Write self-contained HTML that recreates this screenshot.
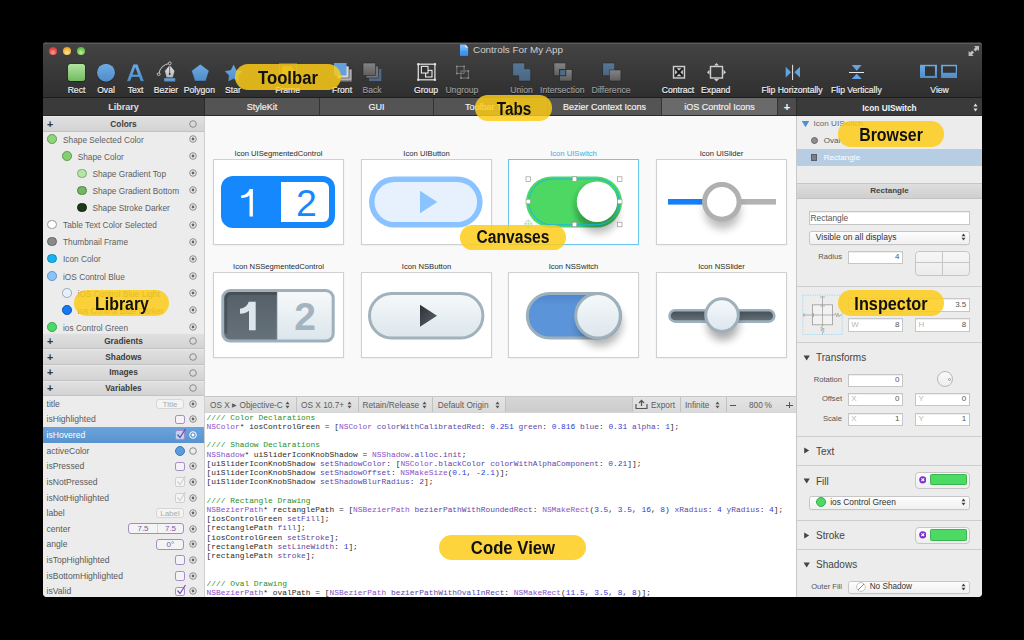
<!DOCTYPE html>
<html><head><meta charset="utf-8">
<style>
*{margin:0;padding:0;box-sizing:border-box}
html,body{width:1024px;height:640px;overflow:hidden;background:#000;font-family:"Liberation Sans",sans-serif}
.a{position:absolute}
.win{left:43px;top:42px;width:939px;height:555px;background:#ececec;border-radius:4px;overflow:hidden}
.tb{left:43px;top:42px;width:939px;height:56px;background:linear-gradient(#444,#2f2f2f);border-radius:0;border-top:1px solid #2a2a2a;box-shadow:inset 0 1px 0 #5c5c5c;border-bottom:1px solid #1c1c1c}
.lbl{position:absolute;top:85px;font-size:8.6px;color:#eeeeee;-webkit-text-stroke:.2px currentColor;white-space:nowrap;transform:translateX(-50%);line-height:10px;text-shadow:0 1px 0 #111}
.lbl.dim{color:#9a9a9a}
.tabbar{left:43px;top:98px;width:939px;height:18px;background:#3a3a3a;border-bottom:1px solid #2a2a2a}
.tab{position:absolute;top:98px;height:17px;background:#545454;color:#f4f4f4;font-size:9px;line-height:18px;-webkit-text-stroke:.15px currentColor;text-align:center;border-right:1px solid #333}
.code{font-family:"Liberation Mono",monospace;font-size:7.88px;line-height:9.22px;color:#2a2a2a;white-space:pre}
.cm{color:#2a8f2a}.cl{color:#8b50c4}.me{color:#5c48a8}.nu{color:#2d3cd8}
.pill{background:rgba(253,204,21,.84)}
.ptxt{width:120px;height:20px;line-height:20px;text-align:center;font-size:18px;font-weight:bold;color:#111;white-space:nowrap}
</style></head>
<body>
<div id="wrap" style="position:absolute;left:0;top:0;width:1024px;height:640px;clip-path:inset(42px 42px 43px 43px round 4px)">
<div class="a win"></div>
<!-- title/toolbar -->
<div class="a tb"></div>
<!-- traffic lights -->
<div class="a" style="left:49px;top:47px;width:8px;height:8px;border-radius:50%;background:radial-gradient(circle at 50% 70%,#ff9a94,#e0443e 60%,#b02a25)"></div>
<div class="a" style="left:63px;top:47px;width:8px;height:8px;border-radius:50%;background:radial-gradient(circle at 50% 70%,#ffe39a,#f0b238 60%,#c08820)"></div>
<div class="a" style="left:77px;top:47px;width:8px;height:8px;border-radius:50%;background:radial-gradient(circle at 50% 70%,#bff0a0,#6cc24a 60%,#4a9a30)"></div>
<!-- title -->
<svg class="a" style="left:458px;top:43px" width="12" height="15" viewBox="458 43 12 15"><defs><linearGradient id="docg" x1="0" y1="0" x2="0" y2="1"><stop offset="0" stop-color="#86c6ff"/><stop offset="1" stop-color="#2a86ee"/></linearGradient></defs><path d="M460 44.5h5.4l2.7 2.9v8.6h-8.1z" fill="url(#docg)"/><path d="M465.4 44.5v2.9h2.7z" fill="#e8f2fc"/><path d="M461.8 51.5h4.6" stroke="#3a90ea" stroke-width="1"/></svg>
<div class="a" style="left:473px;top:44px;font-size:9.9px;color:#d0d0d0;line-height:12px">Controls For My App</div>
<!-- fullscreen icon -->
<svg class="a" style="left:960px;top:40px" width="24" height="20" viewBox="960 40 24 20"><path d="M974 46h5v5l-1.5-1.5-2 2-2-2 2-2z" fill="#bdbdbd"/><path d="M973.6 56h-5v-5l1.5 1.5 2-2 2 2-2 2z" fill="#bdbdbd"/></svg>

<svg class="a" style="left:0;top:0" width="1024" height="98" viewBox="0 0 1024 98">
<defs>
<linearGradient id="gG" x1="0" y1="0" x2="0" y2="1"><stop offset="0" stop-color="#b2e3a0"/><stop offset="1" stop-color="#72bb62"/></linearGradient>
<linearGradient id="gB" x1="0" y1="0" x2="0" y2="1"><stop offset="0" stop-color="#6fabe2"/><stop offset="1" stop-color="#4f8cc9"/></linearGradient>
<linearGradient id="gGr" x1="0" y1="0" x2="0" y2="1"><stop offset="0" stop-color="#858585"/><stop offset="1" stop-color="#5e5e5e"/></linearGradient>
<linearGradient id="gBG" x1="0" y1="0" x2="0" y2="1"><stop offset="0" stop-color="#567896"/><stop offset="1" stop-color="#4a6682"/></linearGradient>
<linearGradient id="gW" x1="0" y1="0" x2="0" y2="1"><stop offset="0" stop-color="#e8e8e8"/><stop offset="1" stop-color="#b8b8b8"/></linearGradient>
</defs>
<!-- Rect -->
<rect x="67.5" y="63.5" width="18" height="18.5" rx="3" fill="#1a1a1a" opacity=".6"/>
<rect x="68" y="64" width="17" height="17" rx="2.5" fill="url(#gG)"/>
<!-- Oval -->
<circle cx="106" cy="73" r="9.5" fill="#1a1a1a" opacity=".6"/>
<circle cx="106" cy="72.7" r="9" fill="url(#gB)"/>
<!-- Text A -->
<path d="M133.3 64.3h4.2l6.6 16.9h-3.6l-1.5-4.1h-7.2l-1.5 4.1h-3.5zM132.8 74.4h5l-2.5-6.8z" fill="url(#gB)" fill-rule="evenodd" stroke="#1a1a1a" stroke-width=".4" stroke-opacity=".5"/>
<!-- Bezier -->
<path d="M158.8 74.2 Q160 65 169.8 63.3" fill="none" stroke="#d8d8d8" stroke-width=".9"/>
<ellipse cx="158.7" cy="74.2" rx="1.6" ry="1.2" fill="#333" stroke="#e0e0e0" stroke-width=".8"/>
<circle cx="169.8" cy="63.3" r="1.4" fill="#333" stroke="#e0e0e0" stroke-width=".8"/>
<path d="M169.7 64.8 L174.8 71 L173 77.7 L166.4 77.7 L164.6 71 Z" fill="url(#gW)" stroke="#222" stroke-width=".5"/>
<line x1="169.7" y1="65.5" x2="169.7" y2="74" stroke="#333" stroke-width=".7"/>
<circle cx="169.7" cy="74" r=".9" fill="#333"/>
<rect x="164.2" y="78.3" width="11" height="3.2" fill="url(#gB)"/>
<!-- Polygon -->
<polygon points="200.3,64.3 209.0,70.7 205.7,80.9 194.9,80.9 191.6,70.7" fill="url(#gB)" stroke="#1a1a1a" stroke-opacity=".5" stroke-width=".5"/>
<!-- Star -->
<polygon points="233.6,64.3 236.5,69.9 242.7,70.9 238.4,75.4 239.2,81.7 233.6,78.9 228.0,81.7 228.8,75.4 224.5,70.9 230.7,69.9" stroke-linejoin="round" fill="url(#gB)" stroke="#1a1a1a" stroke-opacity=".5" stroke-width=".5"/>
<!-- Frame -->
<rect x="279.5" y="63.5" width="17" height="17" fill="none" stroke="#3ec0e8" stroke-width="1" stroke-dasharray="1 1"/>
<path d="M282 66h9l3 3v10h-12z" fill="#e8d070" opacity=".5"/>
<!-- Front -->
<rect x="340" y="69" width="12" height="12.5" fill="#b0b0b0"/>
<rect x="340" y="69" width="12" height="12" fill="none" stroke="#2a2a2a" stroke-width=".6"/>
<rect x="337" y="66" width="12" height="12.5" fill="#d8d8d8"/>
<rect x="337" y="66" width="12" height="12" fill="none" stroke="#2a2a2a" stroke-width=".6"/>
<rect x="334" y="63" width="12.5" height="12.5" fill="#64a0dc"/>
<!-- Back -->
<rect x="369" y="69" width="12.3" height="12" fill="#4d6a88"/>
<rect x="366" y="66" width="12.3" height="12" fill="#737373" stroke="#2a2a2a" stroke-width=".6"/>
<rect x="363" y="63" width="12.5" height="12.5" fill="url(#gGr)" stroke="#2a2a2a" stroke-width=".6"/>
<!-- Group -->
<rect x="418.3" y="64.2" width="16.6" height="15.6" fill="none" stroke="#d8d8d8" stroke-width="1.3"/>
<g fill="#e0e0e0"><circle cx="418.3" cy="64.2" r="1.2"/><circle cx="434.9" cy="64.2" r="1.2"/><circle cx="418.3" cy="79.8" r="1.2"/><circle cx="434.9" cy="79.8" r="1.2"/></g>
<rect x="425.6" y="70.4" width="6.4" height="6.6" fill="none" stroke="#e8e8e8" stroke-width="1.1"/>
<rect x="421.4" y="66.4" width="6.6" height="6.6" fill="#2f2f2f" stroke="#e8e8e8" stroke-width="1.1"/>
<!-- Ungroup -->
<g stroke="#777" stroke-width="1" fill="none"><rect x="456.8" y="66.4" width="7.3" height="7"/><rect x="461" y="71" width="7.3" height="7"/></g>
<g fill="#888"><circle cx="456.8" cy="66.4" r="1"/><circle cx="464.1" cy="66.4" r="1"/><circle cx="456.8" cy="73.4" r="1"/><circle cx="468.3" cy="71" r="1"/><circle cx="461" cy="78" r="1"/><circle cx="468.3" cy="78" r="1"/></g>
<!-- Union -->
<path d="M512.7 63h12v5.8h6v12.3h-12v-5.3h-6z" fill="url(#gBG)" stroke="#222" stroke-width=".5"/>
<!-- Intersection -->
<rect x="554" y="63" width="11.8" height="12.8" fill="url(#gGr)" stroke="#262626" stroke-width=".5"/>
<rect x="559.7" y="69.7" width="12.3" height="11.3" fill="url(#gGr)" stroke="#262626" stroke-width=".5"/>
<rect x="559.7" y="69.7" width="6.1" height="6.1" fill="#4f6d8a" stroke="#262626" stroke-width=".8"/>
<!-- Difference -->
<rect x="602.8" y="63" width="12" height="12.8" fill="url(#gBG)" stroke="#222" stroke-width=".5"/>
<rect x="609.4" y="70" width="11.5" height="11" fill="url(#gGr)" stroke="#222" stroke-width=".5"/>
<!-- Contract -->
<rect x="673.5" y="66.5" width="11" height="11.5" fill="#353535" stroke="#cfcfcf" stroke-width="1.4"/>
<path d="M675.3 68.3l7.4 7.4M682.7 68.3l-7.4 7.4" stroke="#181818" stroke-width="1.4"/>
<g fill="#d0d0d0"><path d="M676.6 68.3h4.8l-2.4 2.2z"/><path d="M676.6 76.2h4.8l-2.4-2.2z"/><path d="M675.2 69.8v4.8l2.2-2.4z"/><path d="M682.8 69.8v4.8l-2.2-2.4z"/></g>
<!-- Expand -->
<rect x="710.5" y="66.5" width="12" height="11.5" fill="none" stroke="#cfcfcf" stroke-width="1.4"/>
<g fill="#d0d0d0"><path d="M714 65.5h5l-2.5-2.5z"/><path d="M714 79h5l-2.5 2.5z"/><path d="M709.5 69.8v5l-2.5-2.5z"/><path d="M723.5 69.8v5l2.5-2.5z"/></g>
<!-- Flip H -->
<path d="M785.7 66.8v10.7l5.3-5.35z" fill="#64a4e0"/>
<path d="M800 66.8v10.7l-5.6-5.35z" fill="#64a4e0"/>
<line x1="792.6" y1="64.8" x2="792.6" y2="80" stroke="#e8e8e8" stroke-width="1"/>
<!-- Flip V -->
<path d="M851.7 65h10l-5 5.7z" fill="#64a4e0"/>
<path d="M851.7 79h10l-5-5.2z" fill="#64a4e0"/>
<line x1="849" y1="72.5" x2="864" y2="72.5" stroke="#e8e8e8" stroke-width="1.1"/>
<!-- View -->
<rect x="920" y="64.8" width="17" height="13.2" fill="url(#gB)"/>
<rect x="925" y="66.3" width="9.9" height="9.6" fill="#333"/>
<rect x="941.1" y="64.8" width="15.9" height="13.2" fill="url(#gB)"/>
<rect x="942.9" y="66.3" width="12.8" height="6.5" fill="#333"/>
</svg>
<div class="lbl" style="left:76.5px">Rect</div>
<div class="lbl" style="left:106px">Oval</div>
<div class="lbl" style="left:135.6px">Text</div>
<div class="lbl" style="left:166px">Bezier</div>
<div class="lbl" style="left:199.4px">Polygon</div>
<div class="lbl" style="left:233px">Star</div>
<div class="lbl" style="left:287.6px">Frame</div>
<div class="lbl" style="left:342px">Front</div>
<div class="lbl dim" style="left:372px">Back</div>
<div class="lbl" style="left:426px">Group</div>
<div class="lbl dim" style="left:461.9px">Ungroup</div>
<div class="lbl dim" style="left:521.6px">Union</div>
<div class="lbl dim" style="left:562.3px">Intersection</div>
<div class="lbl dim" style="left:611px">Difference</div>
<div class="lbl" style="left:678px">Contract</div>
<div class="lbl" style="left:715.7px">Expand</div>
<div class="lbl" style="left:792px">Flip Horizontally</div>
<div class="lbl" style="left:856.4px">Flip Vertically</div>
<div class="lbl" style="left:939.6px">View</div>


<!-- tab bar -->
<div class="a tabbar"></div>
<div class="a" style="left:43px;top:98px;width:161px;height:17px;color:#e0e0e0;font-size:9px;font-weight:bold;line-height:18px;text-align:center">Library</div>
<div class="a" style="left:204px;top:98px;width:1px;height:18px;background:#2a2a2a"></div>
<div class="tab" style="left:205px;width:115px">StyleKit</div>
<div class="tab" style="left:320px;width:114px">GUI</div>
<div class="tab" style="left:434px;width:114px">Toolbar Tabs</div>
<div class="tab" style="left:548px;width:114px">Bezier Context Icons</div>
<div class="tab" style="left:662px;width:116px;background:#6a6a6a">iOS Control Icons</div>
<div class="tab" style="left:778px;width:19px;background:#4c4c4c;font-size:11px;font-weight:bold;border-right:1px solid #2a2a2a">+</div>
<div class="a" style="left:797px;top:98.5px;width:185px;height:17px;color:#f4f4f4;font-size:8.3px;font-weight:bold;line-height:18px;text-align:center">Icon UISwitch</div>

<div class="a" style="left:43px;top:116px;width:161px;height:481px;background:#ececec"></div>
<div class="a" style="left:204px;top:116px;width:1px;height:481px;background:#cfcfcf"></div>
<div class="a" style="left:43px;top:116px;width:161px;height:16px;background:linear-gradient(#e0e0e0,#d3d3d3);border-bottom:1px solid #c2c2c2;border-top:1px solid #e9e9e9"></div>
<div class="a" style="left:46.2px;top:116px;width:8px;height:16px;font-size:10.5px;font-weight:bold;color:#333;line-height:16px;text-align:center">+</div>
<div class="a" style="left:43px;top:116px;width:161px;height:16px;font-size:8.3px;font-weight:bold;color:#3c3c3c;line-height:16px;text-align:center">Colors</div>
<svg class="a" style="left:188.9px;top:120.00px" width="8" height="8" viewBox="0 0 8 8"><circle cx="4" cy="4" r="3.3" fill="none" stroke="#8c8c8c" stroke-width="1"/></svg>
<div class="a" style="left:47.2px;top:134.40px;width:9.6px;height:9.6px;border-radius:50%;background:#8ed67c;border:.8px solid #5e9d4f"></div>
<div class="a" style="left:63.0px;top:134.00px;font-size:8.3px;line-height:12px;color:#5e5e5e;white-space:nowrap">Shape Selected Color</div>
<svg class="a" style="left:188.9px;top:135.20px" width="8" height="8" viewBox="0 0 8 8"><circle cx="4" cy="4" r="3.3" fill="none" stroke="#8c8c8c" stroke-width="1"/><circle cx="4" cy="4" r="1.4" fill="#666"/></svg>
<div class="a" style="left:62.2px;top:151.47px;width:9.6px;height:9.6px;border-radius:50%;background:#82d06f;border:.8px solid #5a9a4a"></div>
<div class="a" style="left:77.7px;top:151.07px;font-size:8.3px;line-height:12px;color:#5e5e5e;white-space:nowrap">Shape Color</div>
<svg class="a" style="left:188.9px;top:152.27px" width="8" height="8" viewBox="0 0 8 8"><circle cx="4" cy="4" r="3.3" fill="none" stroke="#8c8c8c" stroke-width="1"/><circle cx="4" cy="4" r="1.4" fill="#666"/></svg>
<div class="a" style="left:77.2px;top:168.54px;width:9.6px;height:9.6px;border-radius:50%;background:#b4e6a4;border:.8px solid #7ba96e"></div>
<div class="a" style="left:92.4px;top:168.14px;font-size:8.3px;line-height:12px;color:#5e5e5e;white-space:nowrap">Shape Gradient Top</div>
<svg class="a" style="left:188.9px;top:169.34px" width="8" height="8" viewBox="0 0 8 8"><circle cx="4" cy="4" r="3.3" fill="none" stroke="#8c8c8c" stroke-width="1"/><circle cx="4" cy="4" r="1.4" fill="#666"/></svg>
<div class="a" style="left:77.2px;top:185.61px;width:9.6px;height:9.6px;border-radius:50%;background:#74b463;border:.8px solid #4e8542"></div>
<div class="a" style="left:92.4px;top:185.21px;font-size:8.3px;line-height:12px;color:#5e5e5e;white-space:nowrap">Shape Gradient Bottom</div>
<svg class="a" style="left:188.9px;top:186.41px" width="8" height="8" viewBox="0 0 8 8"><circle cx="4" cy="4" r="3.3" fill="none" stroke="#8c8c8c" stroke-width="1"/><circle cx="4" cy="4" r="1.4" fill="#666"/></svg>
<div class="a" style="left:77.2px;top:202.68px;width:9.6px;height:9.6px;border-radius:50%;background:#1d381a;border:.8px solid #122610"></div>
<div class="a" style="left:92.4px;top:202.28px;font-size:8.3px;line-height:12px;color:#5e5e5e;white-space:nowrap">Shape Stroke Darker</div>
<svg class="a" style="left:188.9px;top:203.48px" width="8" height="8" viewBox="0 0 8 8"><circle cx="4" cy="4" r="3.3" fill="none" stroke="#8c8c8c" stroke-width="1"/><circle cx="4" cy="4" r="1.4" fill="#666"/></svg>
<div class="a" style="left:47.2px;top:219.75px;width:9.6px;height:9.6px;border-radius:50%;background:#ffffff;border:.8px solid #999"></div>
<div class="a" style="left:63.0px;top:219.35px;font-size:8.3px;line-height:12px;color:#5e5e5e;white-space:nowrap">Table Text Color Selected</div>
<svg class="a" style="left:188.9px;top:220.55px" width="8" height="8" viewBox="0 0 8 8"><circle cx="4" cy="4" r="3.3" fill="none" stroke="#8c8c8c" stroke-width="1"/><circle cx="4" cy="4" r="1.4" fill="#666"/></svg>
<div class="a" style="left:47.2px;top:236.82px;width:9.6px;height:9.6px;border-radius:50%;background:#8a8a8a;border:.8px solid #666"></div>
<div class="a" style="left:63.0px;top:236.42px;font-size:8.3px;line-height:12px;color:#5e5e5e;white-space:nowrap">Thumbnail Frame</div>
<svg class="a" style="left:188.9px;top:237.62px" width="8" height="8" viewBox="0 0 8 8"><circle cx="4" cy="4" r="3.3" fill="none" stroke="#8c8c8c" stroke-width="1"/><circle cx="4" cy="4" r="1.4" fill="#666"/></svg>
<div class="a" style="left:47.2px;top:253.89px;width:9.6px;height:9.6px;border-radius:50%;background:#17b3f0;border:.8px solid #0f88c0"></div>
<div class="a" style="left:63.0px;top:253.49px;font-size:8.3px;line-height:12px;color:#5e5e5e;white-space:nowrap">Icon Color</div>
<svg class="a" style="left:188.9px;top:254.69px" width="8" height="8" viewBox="0 0 8 8"><circle cx="4" cy="4" r="3.3" fill="none" stroke="#8c8c8c" stroke-width="1"/><circle cx="4" cy="4" r="1.4" fill="#666"/></svg>
<div class="a" style="left:47.2px;top:270.96px;width:9.6px;height:9.6px;border-radius:50%;background:#8dc2f7;border:.8px solid #5d94cc"></div>
<div class="a" style="left:63.0px;top:270.56px;font-size:8.3px;line-height:12px;color:#5e5e5e;white-space:nowrap">iOS Control Blue</div>
<svg class="a" style="left:188.9px;top:271.76px" width="8" height="8" viewBox="0 0 8 8"><circle cx="4" cy="4" r="3.3" fill="none" stroke="#8c8c8c" stroke-width="1"/><circle cx="4" cy="4" r="1.4" fill="#666"/></svg>
<div class="a" style="left:62.2px;top:288.03px;width:9.6px;height:9.6px;border-radius:50%;background:#e6f1fd;border:.8px solid #95a8bd"></div>
<div class="a" style="left:77.7px;top:287.63px;font-size:8.3px;line-height:12px;color:#5e5e5e;white-space:nowrap">iOS Control Blue Light</div>
<svg class="a" style="left:188.9px;top:288.83px" width="8" height="8" viewBox="0 0 8 8"><circle cx="4" cy="4" r="3.3" fill="none" stroke="#8c8c8c" stroke-width="1"/><circle cx="4" cy="4" r="1.4" fill="#666"/></svg>
<div class="a" style="left:62.2px;top:305.10px;width:9.6px;height:9.6px;border-radius:50%;background:#1479f2;border:.8px solid #0d55b0"></div>
<div class="a" style="left:77.7px;top:304.70px;font-size:8.3px;line-height:12px;color:#5e5e5e;white-space:nowrap">ios Control Blue Darker</div>
<svg class="a" style="left:188.9px;top:305.90px" width="8" height="8" viewBox="0 0 8 8"><circle cx="4" cy="4" r="3.3" fill="none" stroke="#8c8c8c" stroke-width="1"/><circle cx="4" cy="4" r="1.4" fill="#666"/></svg>
<div class="a" style="left:47.2px;top:322.17px;width:9.6px;height:9.6px;border-radius:50%;background:#4cd964;border:.8px solid #34a84a"></div>
<div class="a" style="left:63.0px;top:321.77px;font-size:8.3px;line-height:12px;color:#5e5e5e;white-space:nowrap">ios Control Green</div>
<svg class="a" style="left:188.9px;top:322.97px" width="8" height="8" viewBox="0 0 8 8"><circle cx="4" cy="4" r="3.3" fill="none" stroke="#8c8c8c" stroke-width="1"/><circle cx="4" cy="4" r="1.4" fill="#666"/></svg>
<div class="a" style="left:43px;top:333px;width:161px;height:16px;background:linear-gradient(#e0e0e0,#d3d3d3);border-bottom:1px solid #c2c2c2;border-top:1px solid #e9e9e9"></div>
<div class="a" style="left:46.2px;top:333px;width:8px;height:16px;font-size:10.5px;font-weight:bold;color:#333;line-height:16px;text-align:center">+</div>
<div class="a" style="left:43px;top:333px;width:161px;height:16px;font-size:8.3px;font-weight:bold;color:#3c3c3c;line-height:16px;text-align:center">Gradients</div>
<svg class="a" style="left:188.9px;top:337.00px" width="8" height="8" viewBox="0 0 8 8"><circle cx="4" cy="4" r="3.3" fill="none" stroke="#8c8c8c" stroke-width="1"/></svg>
<div class="a" style="left:43px;top:349px;width:161px;height:16px;background:linear-gradient(#e0e0e0,#d3d3d3);border-bottom:1px solid #c2c2c2;border-top:1px solid #e9e9e9"></div>
<div class="a" style="left:46.2px;top:349px;width:8px;height:16px;font-size:10.5px;font-weight:bold;color:#333;line-height:16px;text-align:center">+</div>
<div class="a" style="left:43px;top:349px;width:161px;height:16px;font-size:8.3px;font-weight:bold;color:#3c3c3c;line-height:16px;text-align:center">Shadows</div>
<svg class="a" style="left:188.9px;top:353.00px" width="8" height="8" viewBox="0 0 8 8"><circle cx="4" cy="4" r="3.3" fill="none" stroke="#8c8c8c" stroke-width="1"/></svg>
<div class="a" style="left:43px;top:365px;width:161px;height:15.5px;background:linear-gradient(#e0e0e0,#d3d3d3);border-bottom:1px solid #c2c2c2;border-top:1px solid #e9e9e9"></div>
<div class="a" style="left:46.2px;top:365px;width:8px;height:15.5px;font-size:10.5px;font-weight:bold;color:#333;line-height:15.5px;text-align:center">+</div>
<div class="a" style="left:43px;top:365px;width:161px;height:15.5px;font-size:8.3px;font-weight:bold;color:#3c3c3c;line-height:15.5px;text-align:center">Images</div>
<svg class="a" style="left:188.9px;top:368.75px" width="8" height="8" viewBox="0 0 8 8"><circle cx="4" cy="4" r="3.3" fill="none" stroke="#8c8c8c" stroke-width="1"/></svg>
<div class="a" style="left:43px;top:380.5px;width:161px;height:15.5px;background:linear-gradient(#e0e0e0,#d3d3d3);border-bottom:1px solid #c2c2c2;border-top:1px solid #e9e9e9"></div>
<div class="a" style="left:46.2px;top:380.5px;width:8px;height:15.5px;font-size:10.5px;font-weight:bold;color:#333;line-height:15.5px;text-align:center">+</div>
<div class="a" style="left:43px;top:380.5px;width:161px;height:15.5px;font-size:8.3px;font-weight:bold;color:#3c3c3c;line-height:15.5px;text-align:center">Variables</div>
<svg class="a" style="left:188.9px;top:384.25px" width="8" height="8" viewBox="0 0 8 8"><circle cx="4" cy="4" r="3.3" fill="none" stroke="#8c8c8c" stroke-width="1"/></svg>
<div class="a" style="left:46.5px;top:397.80px;font-size:8.6px;line-height:12px;color:#5a5a5a;white-space:nowrap">title</div>
<svg class="a" style="left:188.9px;top:399.80px" width="8" height="8" viewBox="0 0 8 8"><circle cx="4" cy="4" r="3.3" fill="none" stroke="#8c8c8c" stroke-width="1"/><circle cx="4" cy="4" r="1.4" fill="#666"/></svg>
<div class="a" style="left:46.5px;top:413.43px;font-size:8.6px;line-height:12px;color:#5a5a5a;white-space:nowrap">isHighlighted</div>
<svg class="a" style="left:188.9px;top:415.42px" width="8" height="8" viewBox="0 0 8 8"><circle cx="4" cy="4" r="3.3" fill="none" stroke="#8c8c8c" stroke-width="1"/><circle cx="4" cy="4" r="1.4" fill="#666"/></svg>
<div class="a" style="left:43px;top:426.9px;width:161px;height:15.7px;background:linear-gradient(#6ba4dc,#5993cf)"></div>
<div class="a" style="left:46.5px;top:429.05px;font-size:8.6px;line-height:12px;color:#fff;white-space:nowrap">isHovered</div>
<svg class="a" style="left:188.9px;top:431.05px" width="8" height="8" viewBox="0 0 8 8"><circle cx="4" cy="4" r="3.3" fill="none" stroke="#fff" stroke-width="1"/><circle cx="4" cy="4" r="1.4" fill="#fff"/></svg>
<div class="a" style="left:46.5px;top:444.68px;font-size:8.6px;line-height:12px;color:#5a5a5a;white-space:nowrap">activeColor</div>
<svg class="a" style="left:188.9px;top:446.68px" width="8" height="8" viewBox="0 0 8 8"><circle cx="4" cy="4" r="3.3" fill="none" stroke="#8c8c8c" stroke-width="1"/></svg>
<div class="a" style="left:46.5px;top:460.30px;font-size:8.6px;line-height:12px;color:#5a5a5a;white-space:nowrap">isPressed</div>
<svg class="a" style="left:188.9px;top:462.30px" width="8" height="8" viewBox="0 0 8 8"><circle cx="4" cy="4" r="3.3" fill="none" stroke="#8c8c8c" stroke-width="1"/><circle cx="4" cy="4" r="1.4" fill="#666"/></svg>
<div class="a" style="left:46.5px;top:475.93px;font-size:8.6px;line-height:12px;color:#5a5a5a;white-space:nowrap">isNotPressed</div>
<svg class="a" style="left:188.9px;top:477.92px" width="8" height="8" viewBox="0 0 8 8"><circle cx="4" cy="4" r="3.3" fill="none" stroke="#8c8c8c" stroke-width="1"/><circle cx="4" cy="4" r="1.4" fill="#666"/></svg>
<div class="a" style="left:46.5px;top:491.55px;font-size:8.6px;line-height:12px;color:#5a5a5a;white-space:nowrap">isNotHighlighted</div>
<svg class="a" style="left:188.9px;top:493.55px" width="8" height="8" viewBox="0 0 8 8"><circle cx="4" cy="4" r="3.3" fill="none" stroke="#8c8c8c" stroke-width="1"/><circle cx="4" cy="4" r="1.4" fill="#666"/></svg>
<div class="a" style="left:46.5px;top:507.17px;font-size:8.6px;line-height:12px;color:#5a5a5a;white-space:nowrap">label</div>
<svg class="a" style="left:188.9px;top:509.17px" width="8" height="8" viewBox="0 0 8 8"><circle cx="4" cy="4" r="3.3" fill="none" stroke="#8c8c8c" stroke-width="1"/><circle cx="4" cy="4" r="1.4" fill="#666"/></svg>
<div class="a" style="left:46.5px;top:522.80px;font-size:8.6px;line-height:12px;color:#5a5a5a;white-space:nowrap">center</div>
<svg class="a" style="left:188.9px;top:524.80px" width="8" height="8" viewBox="0 0 8 8"><circle cx="4" cy="4" r="3.3" fill="none" stroke="#8c8c8c" stroke-width="1"/><circle cx="4" cy="4" r="1.4" fill="#666"/></svg>
<div class="a" style="left:46.5px;top:538.42px;font-size:8.6px;line-height:12px;color:#5a5a5a;white-space:nowrap">angle</div>
<svg class="a" style="left:188.9px;top:540.42px" width="8" height="8" viewBox="0 0 8 8"><circle cx="4" cy="4" r="3.3" fill="none" stroke="#8c8c8c" stroke-width="1"/><circle cx="4" cy="4" r="1.4" fill="#666"/></svg>
<div class="a" style="left:46.5px;top:554.05px;font-size:8.6px;line-height:12px;color:#5a5a5a;white-space:nowrap">isTopHighlighted</div>
<svg class="a" style="left:188.9px;top:556.05px" width="8" height="8" viewBox="0 0 8 8"><circle cx="4" cy="4" r="3.3" fill="none" stroke="#8c8c8c" stroke-width="1"/><circle cx="4" cy="4" r="1.4" fill="#666"/></svg>
<div class="a" style="left:46.5px;top:569.67px;font-size:8.6px;line-height:12px;color:#5a5a5a;white-space:nowrap">isBottomHighlighted</div>
<svg class="a" style="left:188.9px;top:571.68px" width="8" height="8" viewBox="0 0 8 8"><circle cx="4" cy="4" r="3.3" fill="none" stroke="#8c8c8c" stroke-width="1"/><circle cx="4" cy="4" r="1.4" fill="#666"/></svg>
<div class="a" style="left:46.5px;top:585.30px;font-size:8.6px;line-height:12px;color:#5a5a5a;white-space:nowrap">isValid</div>
<svg class="a" style="left:188.9px;top:587.30px" width="8" height="8" viewBox="0 0 8 8"><circle cx="4" cy="4" r="3.3" fill="none" stroke="#8c8c8c" stroke-width="1"/><circle cx="4" cy="4" r="1.4" fill="#666"/></svg>
<div class="a" style="left:155.6px;top:398.60px;width:28.8px;height:10.5px;border-radius:3px;border:1px solid #d6d6d6;background:#f4f4f4;font-size:8px;line-height:9px;color:#aaa;text-align:center">Title</div>
<div class="a" style="left:175.2px;top:414.82px;width:9.6px;height:9.6px;border-radius:2.2px;border:1px solid #a68bc9;background:#f4f4f4"></div>
<div class="a" style="left:175.2px;top:430.45px;width:9.6px;height:9.6px;border-radius:2.2px;border:1px solid #a68bc9;background:#bcd6f0"></div><svg class="a" style="left:175px;top:428.05px" width="12" height="12" viewBox="0 0 12 12"><path d="M2.5 6.5 L5 9.5 L10.5 1" fill="none" stroke="#7040b0" stroke-width="1.2"/></svg>
<div class="a" style="left:174.8px;top:445.68px;width:10px;height:10px;border-radius:50%;background:#5b9bd9;border:.7px solid #3d7bbd"></div>
<div class="a" style="left:175.2px;top:461.70px;width:9.6px;height:9.6px;border-radius:2.2px;border:1px solid #a68bc9;background:#f4f4f4"></div>
<div class="a" style="left:175.2px;top:477.32px;width:9.6px;height:9.6px;border-radius:2.2px;border:1px solid #cfcfcf;background:#f4f4f4"></div><svg class="a" style="left:175px;top:474.93px" width="12" height="12" viewBox="0 0 12 12"><path d="M2.5 6.5 L5 9.5 L10.5 1" fill="none" stroke="#d0d0d0" stroke-width="1.2"/></svg>
<div class="a" style="left:175.2px;top:492.95px;width:9.6px;height:9.6px;border-radius:2.2px;border:1px solid #cfcfcf;background:#f4f4f4"></div><svg class="a" style="left:175px;top:490.55px" width="12" height="12" viewBox="0 0 12 12"><path d="M2.5 6.5 L5 9.5 L10.5 1" fill="none" stroke="#d0d0d0" stroke-width="1.2"/></svg>
<div class="a" style="left:155.6px;top:507.97px;width:28.8px;height:10.5px;border-radius:3px;border:1px solid #d6d6d6;background:#f4f4f4;font-size:8px;line-height:9px;color:#aaa;text-align:center">Label</div>
<div class="a" style="left:128px;top:523.30px;width:56.4px;height:11px;border-radius:3px;border:1px solid #a68bc9;background:#f4f4f4;font-size:8px;line-height:9.5px;color:#7a5aaa"><div class="a" style="left:0;top:0;width:28px;text-align:center">7.5</div><div class="a" style="left:27.5px;top:0;width:1px;height:9px;background:#d8d0e4"></div><div class="a" style="left:28px;top:0;width:27px;text-align:center">7.5</div></div>
<div class="a" style="left:156.3px;top:538.92px;width:28.1px;height:11px;border-radius:3px;border:1px solid #a68bc9;background:#f4f4f4;font-size:8px;line-height:9.5px;color:#7a5aaa;text-align:center">0°</div>
<div class="a" style="left:175.2px;top:555.45px;width:9.6px;height:9.6px;border-radius:2.2px;border:1px solid #a68bc9;background:#f4f4f4"></div>
<div class="a" style="left:175.2px;top:571.07px;width:9.6px;height:9.6px;border-radius:2.2px;border:1px solid #a68bc9;background:#f4f4f4"></div>
<div class="a" style="left:175.2px;top:586.70px;width:9.6px;height:9.6px;border-radius:2.2px;border:1px solid #a68bc9;background:#f4f4f4"></div><svg class="a" style="left:175px;top:584.30px" width="12" height="12" viewBox="0 0 12 12"><path d="M2.5 6.5 L5 9.5 L10.5 1" fill="none" stroke="#7a4fb5" stroke-width="1.2"/></svg>
<div class="a" style="left:205px;top:116px;width:591px;height:281px;background:#f9f9f9"></div>
<div class="a" style="left:213px;top:159px;width:131px;height:86px;background:#fff;border:1px solid #d0d0d0;box-shadow:0 .5px 1.5px rgba(0,0,0,.1)"></div>
<div class="a" style="left:193px;top:148.5px;width:171px;text-align:center;font-size:7.65px;line-height:10px;color:#2a2a2a;white-space:nowrap">Icon UISegmentedControl</div>
<div class="a" style="left:213px;top:272px;width:131px;height:86px;background:#fff;border:1px solid #d0d0d0;box-shadow:0 .5px 1.5px rgba(0,0,0,.1)"></div>
<div class="a" style="left:193px;top:261.5px;width:171px;text-align:center;font-size:7.65px;line-height:10px;color:#2a2a2a;white-space:nowrap">Icon NSSegmentedControl</div>
<div class="a" style="left:361px;top:159px;width:131px;height:86px;background:#fff;border:1px solid #d0d0d0;box-shadow:0 .5px 1.5px rgba(0,0,0,.1)"></div>
<div class="a" style="left:341px;top:148.5px;width:171px;text-align:center;font-size:7.65px;line-height:10px;color:#2a2a2a;white-space:nowrap">Icon UIButton</div>
<div class="a" style="left:361px;top:272px;width:131px;height:86px;background:#fff;border:1px solid #d0d0d0;box-shadow:0 .5px 1.5px rgba(0,0,0,.1)"></div>
<div class="a" style="left:341px;top:261.5px;width:171px;text-align:center;font-size:7.65px;line-height:10px;color:#2a2a2a;white-space:nowrap">Icon NSButton</div>
<div class="a" style="left:508px;top:159px;width:131px;height:86px;background:#fff;border:1px solid #6cc6f2;box-shadow:0 .5px 1.5px rgba(0,0,0,.1)"></div>
<div class="a" style="left:488px;top:148.5px;width:171px;text-align:center;font-size:7.65px;line-height:10px;color:#39aee8;white-space:nowrap">Icon UISwitch</div>
<div class="a" style="left:508px;top:272px;width:131px;height:86px;background:#fff;border:1px solid #d0d0d0;box-shadow:0 .5px 1.5px rgba(0,0,0,.1)"></div>
<div class="a" style="left:488px;top:261.5px;width:171px;text-align:center;font-size:7.65px;line-height:10px;color:#2a2a2a;white-space:nowrap">Icon NSSwitch</div>
<div class="a" style="left:656px;top:159px;width:131px;height:86px;background:#fff;border:1px solid #d0d0d0;box-shadow:0 .5px 1.5px rgba(0,0,0,.1)"></div>
<div class="a" style="left:636px;top:148.5px;width:171px;text-align:center;font-size:7.65px;line-height:10px;color:#2a2a2a;white-space:nowrap">Icon UISlider</div>
<div class="a" style="left:656px;top:272px;width:131px;height:86px;background:#fff;border:1px solid #d0d0d0;box-shadow:0 .5px 1.5px rgba(0,0,0,.1)"></div>
<div class="a" style="left:636px;top:261.5px;width:171px;text-align:center;font-size:7.65px;line-height:10px;color:#2a2a2a;white-space:nowrap">Icon NSSlider</div>
<svg class="a" style="left:0;top:0" width="1024" height="400" viewBox="0 0 1024 400">
<defs>
<filter id="blur3" x="-50%" y="-50%" width="200%" height="200%"><feGaussianBlur stdDeviation="3"/></filter>
<filter id="blur2" x="-50%" y="-50%" width="200%" height="200%"><feGaussianBlur stdDeviation="2"/></filter>
<filter id="blur4" x="-80%" y="-80%" width="260%" height="260%"><feGaussianBlur stdDeviation="4.2"/></filter>
<filter id="blur1" x="-50%" y="-50%" width="200%" height="200%"><feGaussianBlur stdDeviation="1"/></filter>
<linearGradient id="nsL" x1="0" y1="0" x2="0" y2="1"><stop offset="0" stop-color="#f6f9fb"/><stop offset="1" stop-color="#dce6ec"/></linearGradient>
<linearGradient id="nsD" x1="0" y1="0" x2="0" y2="1"><stop offset="0" stop-color="#555f67"/><stop offset="1" stop-color="#66727a"/></linearGradient>
<linearGradient id="nsTri" x1="0" y1="0" x2="1" y2="1"><stop offset="0" stop-color="#2c3236"/><stop offset="1" stop-color="#5a656c"/></linearGradient>
<linearGradient id="nsBlue" x1="0" y1="0" x2="0" y2="1"><stop offset="0" stop-color="#4d86cc"/><stop offset=".25" stop-color="#5b93d8"/><stop offset="1" stop-color="#5c95d9"/></linearGradient>
<linearGradient id="nsTrack" x1="0" y1="0" x2="0" y2="1"><stop offset="0" stop-color="#434c53"/><stop offset="1" stop-color="#67737b"/></linearGradient>
<clipPath id="swclip"><rect x="526" y="176.6" width="96" height="51" rx="25.5"/></clipPath>
</defs>
<!-- UISegmented -->
<rect x="221" y="176" width="114" height="52" rx="12" fill="#1688fd"/>
<path d="M281 182h42a6 6 0 0 1 6 6v28a6 6 0 0 1-6 6h-42z" fill="#fff"/>
<path d="M249.6 189h3.3v27.5h-3.4v-21.2c-1.6 1.7-4.6 2.7-8.3 2.8v-2.5c4.2-.4 7.2-2.7 8.4-6.6z" fill="#fff"/>
<text x="306.5" y="216.3" font-family="Liberation Sans" font-size="37.5" fill="#1688fd" text-anchor="middle">2</text>
<!-- UIButton -->
<rect x="369" y="176.4" width="113.6" height="51.2" rx="25.6" fill="#8ac3ff"/>
<rect x="374.5" y="181.9" width="102.6" height="40.2" rx="20.1" fill="#e7f1fe"/>
<path d="M420 190.7L437.3 202L420 213.2z" fill="#8ac3ff"/>
<!-- UISwitch -->
<rect x="526" y="176.6" width="96" height="51" rx="25.5" fill="#4cd863"/>
<circle cx="598" cy="213" r="20" fill="#000" opacity=".28" filter="url(#blur4)"/>
<g clip-path="url(#swclip)"><circle cx="595.5" cy="204.5" r="23" fill="#1f7a33" opacity=".16" filter="url(#blur1)"/></g>
<circle cx="597" cy="201.75" r="20.2" fill="#fff"/>
<rect x="528.9" y="179" width="90.4" height="45.8" rx="22.9" fill="none" stroke="#1eb2ee" stroke-width="1"/>
<g fill="#fff" stroke="#8a8a8a" stroke-width=".6">
<rect x="526" y="176.8" width="4.6" height="4.6"/><rect x="572.2" y="176.8" width="4.6" height="4.6"/><rect x="617.4" y="176.8" width="4.6" height="4.6"/>
<rect x="526" y="199.2" width="4.6" height="4.6"/><rect x="617.4" y="199.2" width="4.6" height="4.6"/>
<rect x="572.2" y="222.2" width="4.6" height="4.6"/><rect x="617.4" y="222.2" width="4.6" height="4.6"/>
</g>
<g stroke="#7fd18a" stroke-width=".7" fill="none" opacity=".8"><circle cx="528.3" cy="223.8" r="3.2"/><line x1="524" y1="223.8" x2="532.6" y2="223.8"/><line x1="528.3" y1="219.5" x2="528.3" y2="228"/></g>
<!-- UISlider -->
<rect x="668" y="199" width="36" height="5.6" fill="#147efb"/>
<rect x="740" y="199" width="36" height="5.6" fill="#b3b3b3"/>
<circle cx="722.5" cy="211" r="18" fill="#000" opacity=".26" filter="url(#blur4)"/>
<circle cx="721.8" cy="201.85" r="17.3" fill="#fff" stroke="#b0b0b0" stroke-width="5"/>
<!-- NSSegmented -->
<rect x="221.3" y="289" width="113.4" height="53.6" rx="9" fill="#9eb0bc"/>
<path d="M230.3 292h46.5v47.6h-46.5a6 6 0 0 1-6-6v-35.6a6 6 0 0 1 6-6z" fill="url(#nsD)"/>
<path d="M277.5 292h48.2a6 6 0 0 1 6 6v35.6a6 6 0 0 1-6 6h-48.2z" fill="url(#nsL)"/>
<path d="M230.3 292h46.5v3h-46.5a6 6 0 0 0-3 3v35.6h-3v-35.6a6 6 0 0 1 6-6z" fill="#3d464d" opacity=".6"/>
<path d="M248.7 301.7h7v28.6h-6.7v-19.6c-2.3 1.8-5.3 2.9-9 3.1v-5c4.5-.6 7.5-3.1 8.7-7.1z" fill="#dde6ec"/>
<text x="305" y="330.3" font-family="Liberation Sans" font-weight="bold" font-size="39" fill="#a4b4be" text-anchor="middle">2</text>
<!-- NSButton -->
<rect x="369.5" y="293.5" width="113.4" height="44.5" rx="22.25" fill="url(#nsL)" stroke="#a1b2bd" stroke-width="3"/>
<path d="M420 304.8L437 315.8L420 326.8z" fill="url(#nsTri)"/>
<!-- NSSwitch -->
<rect x="527.3" y="293.5" width="93.2" height="44.5" rx="22.25" fill="url(#nsBlue)" stroke="#9eb0bc" stroke-width="3"/>
<circle cx="600" cy="324" r="22" fill="#000" opacity=".3" filter="url(#blur4)"/>
<circle cx="598" cy="315.75" r="22.3" fill="url(#nsL)" stroke="#9eb0bc" stroke-width="3"/>
<!-- NSSlider -->
<rect x="669.5" y="310.3" width="104.8" height="11.3" rx="5.65" fill="url(#nsTrack)" stroke="#9eb0bc" stroke-width="2.6"/>
<circle cx="723" cy="324.5" r="16" fill="#000" opacity=".32" filter="url(#blur4)"/>
<circle cx="722" cy="315.1" r="16.3" fill="url(#nsL)" stroke="#9eb0bc" stroke-width="3"/>
</svg>
<div class="a" style="left:205px;top:396px;width:591px;height:1px;background:#c6c6c6"></div>
<div class="a" style="left:205px;top:397px;width:591px;height:16px;background:linear-gradient(#e4e4e4,#dadada);border-bottom:1px solid #d6d6d6"></div>
<div class="a" style="left:505.5px;top:397px;width:126px;height:15px;background:linear-gradient(#d6d6d6,#cdcdcd)"></div>
<div class="a" style="left:295.5px;top:397px;width:1px;height:15px;background:#c2c2c2"></div>
<div class="a" style="left:357.5px;top:397px;width:1px;height:15px;background:#c2c2c2"></div>
<div class="a" style="left:432px;top:397px;width:1px;height:15px;background:#c2c2c2"></div>
<div class="a" style="left:505px;top:397px;width:1px;height:15px;background:#c2c2c2"></div>
<div class="a" style="left:631.5px;top:397px;width:1px;height:15px;background:#c2c2c2"></div>
<div class="a" style="left:680px;top:397px;width:1px;height:15px;background:#c2c2c2"></div>
<div class="a" style="left:725.5px;top:397px;width:1px;height:15px;background:#c2c2c2"></div>
<div class="a" style="left:210px;top:400px;font-size:8.3px;line-height:11px;color:#5c5c5c;white-space:nowrap">OS X <span style="font-size:6px;vertical-align:1px">&#9654;</span> Objective-C</div>
<div class="a" style="left:285.3px;top:401px"><svg width="5" height="8" viewBox="0 0 5 8" style="display:block"><path d="M.5 3.2L2.5.6 4.5 3.2zM.5 4.8L2.5 7.4 4.5 4.8z" fill="#555"/></svg></div>
<div class="a" style="left:301px;top:400px;font-size:8.3px;line-height:11px;color:#5c5c5c;white-space:nowrap">OS X 10.7+</div>
<div class="a" style="left:347.3px;top:401px"><svg width="5" height="8" viewBox="0 0 5 8" style="display:block"><path d="M.5 3.2L2.5.6 4.5 3.2zM.5 4.8L2.5 7.4 4.5 4.8z" fill="#555"/></svg></div>
<div class="a" style="left:362.5px;top:400px;font-size:8.3px;line-height:11px;color:#5c5c5c;white-space:nowrap">Retain/Release</div>
<div class="a" style="left:422.3px;top:401px"><svg width="5" height="8" viewBox="0 0 5 8" style="display:block"><path d="M.5 3.2L2.5.6 4.5 3.2zM.5 4.8L2.5 7.4 4.5 4.8z" fill="#555"/></svg></div>
<div class="a" style="left:437.8px;top:400px;font-size:8.3px;line-height:11px;color:#5c5c5c;white-space:nowrap">Default Origin</div>
<div class="a" style="left:494.8px;top:401px"><svg width="5" height="8" viewBox="0 0 5 8" style="display:block"><path d="M.5 3.2L2.5.6 4.5 3.2zM.5 4.8L2.5 7.4 4.5 4.8z" fill="#555"/></svg></div>
<svg class="a" style="left:635px;top:399px" width="13" height="11" viewBox="0 0 13 11"><path d="M1 5v4.5h11V5" fill="none" stroke="#555" stroke-width="1.2"/><path d="M6.5 7V1.5M4 4l2.5-2.7L9 4" fill="none" stroke="#555" stroke-width="1.2"/></svg>
<div class="a" style="left:651px;top:400px;font-size:8.3px;line-height:11px;color:#5c5c5c;white-space:nowrap">Export</div>
<div class="a" style="left:685px;top:400px;font-size:8.3px;line-height:11px;color:#5c5c5c;white-space:nowrap">Infinite</div>
<div class="a" style="left:715.3px;top:401px"><svg width="5" height="8" viewBox="0 0 5 8" style="display:block"><path d="M.5 3.2L2.5.6 4.5 3.2zM.5 4.8L2.5 7.4 4.5 4.8z" fill="#555"/></svg></div>
<div class="a" style="left:730px;top:404.5px;width:6px;height:1.1px;background:#555"></div>
<div class="a" style="left:749px;top:400px;font-size:8.3px;line-height:11px;color:#5c5c5c;white-space:nowrap">800&#8201;%</div>
<div class="a" style="left:786px;top:404.5px;width:6.5px;height:1.1px;background:#555"></div><div class="a" style="left:788.7px;top:401.8px;width:1.1px;height:6.5px;background:#555"></div>
<div class="a" style="left:205px;top:413px;width:591px;height:184px;background:#fff"></div>
<pre class="a code" style="left:206.6px;top:412.7px"><span class="cm">//// Color Declarations</span>
<span class="cl">NSColor</span>* iosControlGreen = [<span class="cl">NSColor</span> <span class="me">colorWithCalibratedRed</span>: <span class="nu">0.251</span> <span class="me">green</span>: <span class="nu">0.816</span> <span class="me">blue</span>: <span class="nu">0.31</span> <span class="me">alpha</span>: <span class="nu">1</span>];

<span class="cm">//// Shadow Declarations</span>
<span class="cl">NSShadow</span>* uiSliderIconKnobShadow = <span class="cl">NSShadow</span>.<span class="me">alloc</span>.<span class="me">init</span>;
[uiSliderIconKnobShadow <span class="me">setShadowColor</span>: [<span class="cl">NSColor</span>.<span class="me">blackColor</span> <span class="me">colorWithAlphaComponent</span>: <span class="nu">0.21</span>]];
[uiSliderIconKnobShadow <span class="me">setShadowOffset</span>: <span class="cl">NSMakeSize</span>(<span class="nu">0.1</span>, <span class="nu">-2.1</span>)];
[uiSliderIconKnobShadow <span class="me">setShadowBlurRadius</span>: <span class="nu">2</span>];

<span class="cm">//// Rectangle Drawing</span>
<span class="cl">NSBezierPath</span>* rectanglePath = [<span class="cl">NSBezierPath</span> <span class="me">bezierPathWithRoundedRect</span>: <span class="cl">NSMakeRect</span>(<span class="nu">3.5</span>, <span class="nu">3.5</span>, <span class="nu">16</span>, <span class="nu">8</span>) <span class="me">xRadius</span>: <span class="nu">4</span> <span class="me">yRadius</span>: <span class="nu">4</span>];
[iosControlGreen <span class="me">setFill</span>];
[rectanglePath <span class="me">fill</span>];
[iosControlGreen <span class="me">setStroke</span>];
[rectanglePath <span class="me">setLineWidth</span>: <span class="nu">1</span>];
[rectanglePath <span class="me">stroke</span>];


<span class="cm">//// Oval Drawing</span>
<span class="cl">NSBezierPath</span>* ovalPath = [<span class="cl">NSBezierPath</span> <span class="me">bezierPathWithOvalInRect</span>: <span class="cl">NSMakeRect</span>(<span class="nu">11.5</span>, <span class="nu">3.5</span>, <span class="nu">8</span>, <span class="nu">8</span>)];</pre>
<div class="a" style="left:796px;top:116px;width:1px;height:481px;background:#c8c8c8"></div>
<div class="a" style="left:797px;top:116px;width:185px;height:481px;background:#ececec"></div>
<svg class="a" style="left:801px;top:119.5px" width="9" height="8" viewBox="0 0 9 8"><path d="M.8 1h7.4L4.5 7.3z" fill="#4a8fd8"/></svg>
<div class="a" style="left:813.5px;top:117.8px;font-size:8.1px;line-height:12px;color:#666;white-space:nowrap">Icon UISwitch</div>
<div class="a" style="left:810.6px;top:136.7px;width:7.6px;height:7.6px;border-radius:50%;background:#8d8d8d;border:.8px solid #666"></div>
<div class="a" style="left:823.7px;top:134.5px;font-size:8.1px;line-height:12px;color:#555;white-space:nowrap">Oval</div>
<div class="a" style="left:797px;top:149.4px;width:185px;height:16.7px;background:#b6cde3"></div>
<div class="a" style="left:811.2px;top:154px;width:6px;height:7.4px;background:#7b8088;border:.7px solid #5a5e66"></div>
<div class="a" style="left:823.7px;top:151.8px;font-size:8.1px;line-height:12px;color:#fff;white-space:nowrap">Rectangle</div>
<div class="a" style="left:797px;top:182.5px;width:185px;height:16.5px;background:linear-gradient(#dedede,#cfcfcf);border-top:1px solid #c6c6c6;border-bottom:1px solid #c2c2c2;font-size:8.05px;font-weight:bold;color:#444;line-height:14.5px;text-align:center">Rectangle</div>
<div class="a" style="left:808.5px;top:211.2px;width:161.8px;height:13.4px;background:#fff;border:1px solid #c6c6c6;box-shadow:inset 0 .5px 0 #e0e0e0"></div>
<div class="a" style="left:810.5px;top:211.5px;font-size:8.4px;line-height:12px;color:#555">Rectangle</div>
<div class="a" style="left:808.5px;top:230.5px;width:161.8px;height:14.0px;background:linear-gradient(#fdfdfd,#f0f0f0);border:1px solid #c6c6c6;border-radius:2.5px;box-shadow:0 .5px 0 rgba(0,0,0,.05)"></div><div class="a" style="left:960.8px;top:233.0px"><svg width="5" height="8" viewBox="0 0 5 8" style="display:block"><path d="M.5 3.2L2.5.6 4.5 3.2zM.5 4.8L2.5 7.4 4.5 4.8z" fill="#444"/></svg></div>
<div class="a" style="left:815.8px;top:231px;font-size:8.5px;line-height:12px;color:#333;white-space:nowrap">Visible on all displays</div>
<div class="a" style="left:782px;top:250.8px;width:60px;text-align:right;font-size:7.6px;line-height:12px;color:#555;white-space:nowrap">Radius</div>
<div class="a" style="left:848.2px;top:250.5px;width:55.3px;height:13.5px;background:#fff;border:1px solid #c6c6c6;box-shadow:inset 0 .5px 0 #e0e0e0"></div><div class="a" style="left:848.2px;top:251.5px;width:51.3px;text-align:right;font-size:8px;line-height:10.5px;color:#555">4</div>
<div class="a" style="left:915px;top:250.5px;width:54.8px;height:25.5px;border:1px solid #c6c6c6;border-radius:4px;background:linear-gradient(#f6f6f6,#ececec)"></div>
<div class="a" style="left:942px;top:251px;width:1px;height:23.5px;background:#c6c6c6"></div><div class="a" style="left:916px;top:262.2px;width:52.8px;height:1px;background:#c6c6c6"></div>
<div class="a" style="left:797px;top:286.3px;width:185px;height:1px;background:#cdcdcd"></div>
<svg class="a" style="left:800px;top:292px" width="46" height="46" viewBox="800 292 46 46">
<rect x="802.8" y="295.1" width="39.4" height="39.4" fill="none" stroke="#8fd2f0" stroke-width=".8" stroke-dasharray="1.2 1.2"/>
<rect x="812.5" y="304.8" width="20" height="20" fill="#f2f2f2" stroke="#9a9a9a" stroke-width=".8"/>
<g stroke="#9a9a9a" stroke-width=".7" fill="none">
<line x1="803" y1="315" x2="812.5" y2="315"/><line x1="812.5" y1="315" x2="832.5" y2="315"/>
<path d="M832.5 315h2l1-1.8 1.2 3.6 1.2-3.6 1.2 3.6 1.2-1.8h1.7"/>
<line x1="822.5" y1="296" x2="822.5" y2="324.8"/>
<path d="M822.5 324.8v2l-1.8 1 3.6 1.2-3.6 1.2 3.6 1.2-1.8 1v2"/>
<line x1="820" y1="297" x2="825" y2="297"/><line x1="820" y1="306" x2="825" y2="306"/><line x1="804" y1="313" x2="804" y2="317"/><line x1="813.5" y1="313" x2="813.5" y2="317"/>
</g></svg>
<div class="a" style="left:848.2px;top:298.3px;width:55.3px;height:14.0px;background:#fff;border:1px solid #c6c6c6;box-shadow:inset 0 .5px 0 #e0e0e0"></div><div class="a" style="left:851.2px;top:299.3px;font-size:8px;line-height:11.0px;color:#b8b8b8">X</div>
<div class="a" style="left:915px;top:298.3px;width:54.8px;height:14.0px;background:#fff;border:1px solid #c6c6c6;box-shadow:inset 0 .5px 0 #e0e0e0"></div><div class="a" style="left:918.5px;top:299.3px;font-size:8px;line-height:11.0px;color:#b8b8b8">Y</div><div class="a" style="left:915.5px;top:299.3px;width:50.8px;text-align:right;font-size:8px;line-height:11.0px;color:#555">3.5</div>
<div class="a" style="left:848.2px;top:317.6px;width:55.3px;height:14.0px;background:#fff;border:1px solid #c6c6c6;box-shadow:inset 0 .5px 0 #e0e0e0"></div><div class="a" style="left:851.2px;top:318.6px;font-size:8px;line-height:11.0px;color:#b8b8b8">W</div><div class="a" style="left:848.2px;top:318.6px;width:51.3px;text-align:right;font-size:8px;line-height:11.0px;color:#555">8</div>
<div class="a" style="left:915px;top:317.6px;width:54.8px;height:14.0px;background:#fff;border:1px solid #c6c6c6;box-shadow:inset 0 .5px 0 #e0e0e0"></div><div class="a" style="left:918.5px;top:318.6px;font-size:8px;line-height:11.0px;color:#b8b8b8">H</div><div class="a" style="left:915.5px;top:318.6px;width:50.8px;text-align:right;font-size:8px;line-height:11.0px;color:#555">8</div>
<div class="a" style="left:797px;top:342px;width:185px;height:1px;background:#cdcdcd"></div>
<svg class="a" style="left:802.5px;top:352.6px" width="9" height="9" viewBox="0 0 9 9"><path d="M.6 2.5h6.2L3.7 7.6z" fill="#444"/></svg><div class="a" style="left:816px;top:351.1px;font-size:10px;line-height:14px;color:#444;white-space:nowrap">Transforms</div>
<div class="a" style="left:782px;top:374.0px;width:60px;text-align:right;font-size:7.6px;line-height:12px;color:#555;white-space:nowrap">Rotation</div>
<div class="a" style="left:848.2px;top:373.8px;width:55.3px;height:13.5px;background:#fff;border:1px solid #c6c6c6;box-shadow:inset 0 .5px 0 #e0e0e0"></div><div class="a" style="left:848.2px;top:374.8px;width:51.3px;text-align:right;font-size:8px;line-height:10.5px;color:#555">0</div>
<div class="a" style="left:936.6px;top:371.4px;width:16px;height:16px;border-radius:50%;border:1px solid #b8b8b8;background:linear-gradient(#fafafa,#ededed)"></div><div class="a" style="left:947.5px;top:378px;width:3px;height:3px;border-radius:50%;border:.7px solid #999"></div>
<div class="a" style="left:782px;top:393.1px;width:60px;text-align:right;font-size:7.6px;line-height:12px;color:#555;white-space:nowrap">Offset</div>
<div class="a" style="left:848.2px;top:392.8px;width:55.3px;height:13.6px;background:#fff;border:1px solid #c6c6c6;box-shadow:inset 0 .5px 0 #e0e0e0"></div><div class="a" style="left:851.2px;top:393.8px;font-size:8px;line-height:10.6px;color:#b8b8b8">X</div><div class="a" style="left:848.2px;top:393.8px;width:51.3px;text-align:right;font-size:8px;line-height:10.6px;color:#555">0</div>
<div class="a" style="left:915px;top:392.8px;width:54.8px;height:13.6px;background:#fff;border:1px solid #c6c6c6;box-shadow:inset 0 .5px 0 #e0e0e0"></div><div class="a" style="left:918.5px;top:393.8px;font-size:8px;line-height:10.6px;color:#b8b8b8">Y</div><div class="a" style="left:915.5px;top:393.8px;width:50.8px;text-align:right;font-size:8px;line-height:10.6px;color:#555">0</div>
<div class="a" style="left:782px;top:412.9px;width:60px;text-align:right;font-size:7.6px;line-height:12px;color:#555;white-space:nowrap">Scale</div>
<div class="a" style="left:848.2px;top:412.5px;width:55.3px;height:13.8px;background:#fff;border:1px solid #c6c6c6;box-shadow:inset 0 .5px 0 #e0e0e0"></div><div class="a" style="left:851.2px;top:413.5px;font-size:8px;line-height:10.8px;color:#b8b8b8">X</div><div class="a" style="left:848.2px;top:413.5px;width:51.3px;text-align:right;font-size:8px;line-height:10.8px;color:#555">1</div>
<div class="a" style="left:915px;top:412.5px;width:54.8px;height:13.8px;background:#fff;border:1px solid #c6c6c6;box-shadow:inset 0 .5px 0 #e0e0e0"></div><div class="a" style="left:918.5px;top:413.5px;font-size:8px;line-height:10.8px;color:#b8b8b8">Y</div><div class="a" style="left:915.5px;top:413.5px;width:50.8px;text-align:right;font-size:8px;line-height:10.8px;color:#555">1</div>
<div class="a" style="left:797px;top:436.2px;width:185px;height:1px;background:#cdcdcd"></div>
<svg class="a" style="left:802.5px;top:446.4px" width="9" height="9" viewBox="0 0 9 9"><path d="M1.2 1.6v6L6.2 4.6z" fill="#444"/></svg><div class="a" style="left:816px;top:444.9px;font-size:10px;line-height:14px;color:#444;white-space:nowrap">Text</div>
<div class="a" style="left:797px;top:465.3px;width:185px;height:1px;background:#cdcdcd"></div>
<svg class="a" style="left:802.5px;top:476.0px" width="9" height="9" viewBox="0 0 9 9"><path d="M.6 2.5h6.2L3.7 7.6z" fill="#444"/></svg><div class="a" style="left:816px;top:474.5px;font-size:10px;line-height:14px;color:#444;white-space:nowrap">Fill</div>
<div class="a" style="left:915px;top:471.8px;width:54.8px;height:17.2px;border:1px solid #c6c6c6;border-radius:4px;background:linear-gradient(#fbfbfb,#efefef)"></div><div class="a" style="left:929.8px;top:474.4px;width:37.2px;height:11.0px;background:#4cd964;border:.6px solid #3bb552;border-radius:1.5px"></div><svg class="a" style="left:918.6px;top:476.1px" width="7.6" height="7.6" viewBox="0 0 8 8"><circle cx="4" cy="4" r="3.8" fill="#7f2fd0"/><path d="M2.5 2.5l3 3M5.5 2.5l-3 3" stroke="#fff" stroke-width="1.1"/></svg>
<div class="a" style="left:808.5px;top:495.6px;width:161.8px;height:14.0px;background:linear-gradient(#fdfdfd,#f0f0f0);border:1px solid #c6c6c6;border-radius:2.5px;box-shadow:0 .5px 0 rgba(0,0,0,.05)"></div><div class="a" style="left:960.8px;top:498.1px"><svg width="5" height="8" viewBox="0 0 5 8" style="display:block"><path d="M.5 3.2L2.5.6 4.5 3.2zM.5 4.8L2.5 7.4 4.5 4.8z" fill="#444"/></svg></div>
<div class="a" style="left:816px;top:497px;width:10px;height:10px;border-radius:50%;background:#4cd964;border:.7px solid #36ad4d"></div>
<div class="a" style="left:830.2px;top:496.2px;font-size:8.4px;line-height:12px;color:#333;white-space:nowrap">ios Control Green</div>
<div class="a" style="left:797px;top:519.8px;width:185px;height:1px;background:#cdcdcd"></div>
<svg class="a" style="left:802.5px;top:530.5px" width="9" height="9" viewBox="0 0 9 9"><path d="M1.2 1.6v6L6.2 4.6z" fill="#444"/></svg><div class="a" style="left:816px;top:529.0px;font-size:10px;line-height:14px;color:#444;white-space:nowrap">Stroke</div>
<div class="a" style="left:915px;top:526.7px;width:54.8px;height:17.7px;border:1px solid #c6c6c6;border-radius:4px;background:linear-gradient(#fbfbfb,#efefef)"></div><div class="a" style="left:929.8px;top:529.3px;width:37.2px;height:11.5px;background:#4cd964;border:.6px solid #3bb552;border-radius:1.5px"></div><svg class="a" style="left:918.6px;top:531.2px" width="7.6" height="7.6" viewBox="0 0 8 8"><circle cx="4" cy="4" r="3.8" fill="#7f2fd0"/><path d="M2.5 2.5l3 3M5.5 2.5l-3 3" stroke="#fff" stroke-width="1.1"/></svg>
<div class="a" style="left:797px;top:549px;width:185px;height:1px;background:#cdcdcd"></div>
<svg class="a" style="left:802.5px;top:559.7px" width="9" height="9" viewBox="0 0 9 9"><path d="M.6 2.5h6.2L3.7 7.6z" fill="#444"/></svg><div class="a" style="left:816px;top:558.2px;font-size:10px;line-height:14px;color:#444;white-space:nowrap">Shadows</div>
<div class="a" style="left:782px;top:581.0px;width:60px;text-align:right;font-size:7.6px;line-height:12px;color:#555;white-space:nowrap">Outer Fill</div>
<div class="a" style="left:848.2px;top:580.5px;width:122.1px;height:13.5px;background:linear-gradient(#fdfdfd,#f0f0f0);border:1px solid #c6c6c6;border-radius:2.5px;box-shadow:0 .5px 0 rgba(0,0,0,.05)"></div><div class="a" style="left:960.8px;top:582.8px"><svg width="5" height="8" viewBox="0 0 5 8" style="display:block"><path d="M.5 3.2L2.5.6 4.5 3.2zM.5 4.8L2.5 7.4 4.5 4.8z" fill="#444"/></svg></div>
<svg class="a" style="left:856px;top:582px" width="10" height="10" viewBox="0 0 10 10"><circle cx="5" cy="5" r="4.4" fill="#fff" stroke="#b0b0b0" stroke-width=".7"/><line x1="2" y1="8" x2="8" y2="2" stroke="#e04848" stroke-width=".9"/></svg>
<div class="a" style="left:869.7px;top:581px;font-size:8.2px;line-height:12px;color:#333;white-space:nowrap">No Shadow</div>
<svg class="a" style="left:972.5px;top:102.5px" width="5" height="9" viewBox="0 0 5 9"><path d="M.4 3.6L2.5.6 4.6 3.6zM.4 5.4L2.5 8.4 4.6 5.4z" fill="#ddd"/></svg>
<div class="a pill" style="left:235px;top:64px;width:106.0px;height:26.0px;border-radius:13.0px"></div>
<div class="a pill" style="left:475.4px;top:95.3px;width:76.4px;height:25.5px;border-radius:12.7px"></div>
<div class="a pill" style="left:838px;top:121px;width:106.3px;height:25.5px;border-radius:12.8px"></div>
<div class="a pill" style="left:460px;top:225.3px;width:106.0px;height:24.7px;border-radius:12.3px"></div>
<div class="a pill" style="left:74.2px;top:289.7px;width:95.3px;height:26.3px;border-radius:13.2px"></div>
<div class="a pill" style="left:838px;top:290.3px;width:106.3px;height:25.5px;border-radius:12.8px"></div>
<div class="a pill" style="left:439.3px;top:535.2px;width:146.7px;height:24.9px;border-radius:12.4px"></div>
<div class="a ptxt" style="left:228.0px;top:67.9px;transform:scaleX(0.928)">Toolbar</div>
<div class="a ptxt" style="left:453.7px;top:98.9px;transform:scaleX(0.851)">Tabs</div>
<div class="a ptxt" style="left:831.1px;top:124.7px;transform:scaleX(0.884)">Browser</div>
<div class="a ptxt" style="left:452.5px;top:227.4px;transform:scaleX(0.868)">Canvases</div>
<div class="a ptxt" style="left:61.5px;top:293.8px;transform:scaleX(0.883)">Library</div>
<div class="a ptxt" style="left:831.1px;top:293.9px;transform:scaleX(0.904)">Inspector</div>
<div class="a ptxt" style="left:453.1px;top:538.0px;transform:scaleX(0.929)">Code View</div>
</div>
</body></html>
